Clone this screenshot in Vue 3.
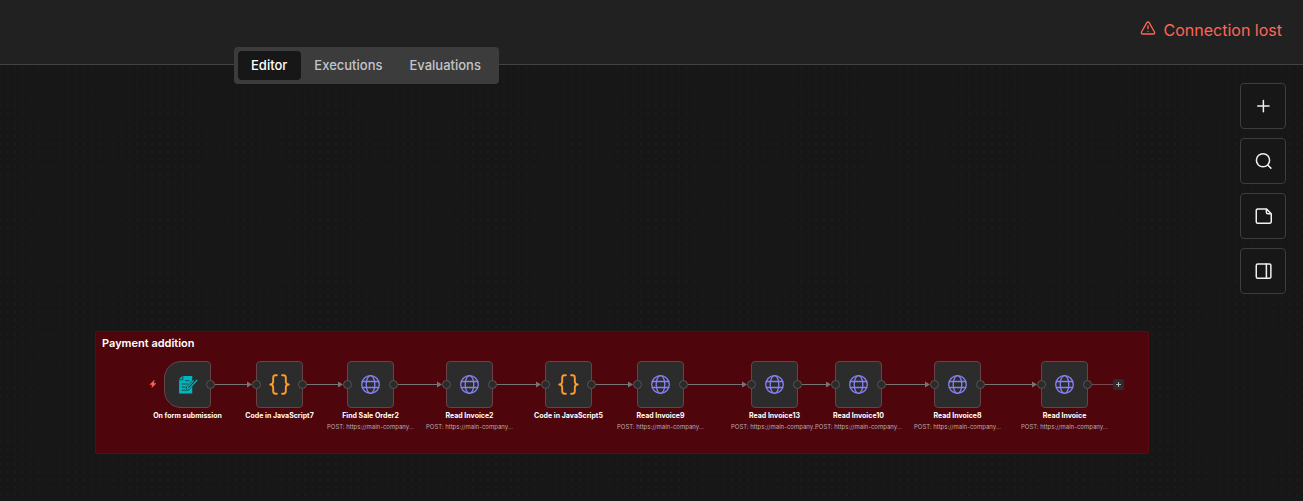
<script setup>
const tabs = ['Editor', 'Executions', 'Evaluations']
const active = 'Editor'

const post = 'POST: https://main-company...'
const nodes = [
  { x: 187, name: 'On form submission', kind: 'form' },
  { x: 279, name: 'Code in JavaScript7', kind: 'code' },
  { x: 370, name: 'Find Sale Order2', kind: 'http', sub: post },
  { x: 469, name: 'Read Invoice2', kind: 'http', sub: post },
  { x: 568, name: 'Code in JavaScript5', kind: 'code' },
  { x: 660, name: 'Read Invoice9', kind: 'http', sub: post },
  { x: 774, name: 'Read Invoice13', kind: 'http', sub: post },
  { x: 858, name: 'Read Invoice10', kind: 'http', sub: post },
  { x: 957, name: 'Read Invoice8', kind: 'http', sub: post },
  { x: 1064, name: 'Read Invoice', kind: 'http', sub: post },
]
const origin = { x: 95 }
const edges = nodes.slice(1).map((n, i) => ({
  from: nodes[i].x + 27 - origin.x,
  to: n.x - 28 - origin.x,
}))
const last = nodes[nodes.length - 1].x - origin.x
</script>

<template>
  <div class="app">
    <header class="header">
      <div class="status" role="status">
        <svg class="warn" viewBox="0 0 24 24" aria-hidden="true">
          <path d="m21.73 18-8-14a2 2 0 0 0-3.48 0l-8 14A2 2 0 0 0 4 21h16a2 2 0 0 0 1.73-3M12 9v4M12 17h.01" />
        </svg>
        <span>Connection lost</span>
      </div>
      <nav class="tabs">
        <button v-for="t in tabs" :key="t" type="button" class="tab" :class="{ active: t === active }">{{ t }}</button>
      </nav>
    </header>

    <main class="canvas">
      <svg class="dots" aria-hidden="true">
        <defs>
          <pattern id="grid" width="16" height="16" patternUnits="userSpaceOnUse" patternTransform="translate(3.6 -1.3) scale(.477)">
            <circle cx="8" cy="8" r="1" />
          </pattern>
        </defs>
        <rect width="100%" height="100%" fill="url(#grid)" />
      </svg>

      <section class="sticky">
        <h2 class="sticky-title">Payment addition</h2>

        <svg class="edges" aria-hidden="true">
          <g v-for="e in edges" :key="e.from">
            <path :d="`M${e.from} 52.5H${e.to - 3}`" />
            <path class="head" :d="`M${e.to - 5} 49.5l5 3-5 3z`" />
          </g>
          <path class="open" :d="`M${last + 27} 52.5h22`" />
        </svg>

        <svg class="bolt" viewBox="0 0 8 8" aria-hidden="true">
          <path d="M5 .5 1 4.6h2.4L2.8 7.5 7 3.4H4.6z" />
        </svg>

        <div
          v-for="n in nodes"
          :key="n.name"
          class="node"
          :class="n.kind"
          :style="{ left: n.x - origin.x + 'px' }"
        >
          <div class="box">
            <svg v-if="n.kind === 'http'" class="icon" viewBox="0 0 21 21" aria-hidden="true">
              <circle cx="10.5" cy="10.5" r="8.8" />
              <ellipse cx="10.5" cy="10.5" rx="4.3" ry="8.8" />
              <path d="M2.4 7.5h16.2M2.4 13.5h16.2" />
            </svg>
            <svg v-else-if="n.kind === 'code'" class="icon" viewBox="0 0 20 20" aria-hidden="true">
              <path d="M7.5 1.2H6.3Q4 1.2 4 3.5V7Q4 10 1.2 10 4 10 4 13v3.5q0 2.3 2.3 2.3h1.2M12.5 1.2h1.2Q16 1.2 16 3.5V7q0 3 2.8 3-2.8 0-2.8 3v3.5q0 2.3-2.3 2.3h-1.2" />
            </svg>
            <svg v-else class="icon" viewBox="0 0 20 20" aria-hidden="true">
              <path class="sheet" d="M5 2h9.500v16.500H2V5z" />
              <path class="cut" d="M2 5.500h3.500V2M7.500 6.500h4.500M4.500 9.500h6M4.500 12.500h3.500M4.500 15.500h6" />
              <path class="pen-gap" d="m10.500 13.500 7-7.500" />
              <path class="pen" d="m9.500 14.500 1-2.500 5-5.500M9.500 14.500l2.500-1 7-7.500" />
            </svg>
            <i v-if="n.kind !== 'form'" class="port in"></i>
            <i class="port out"></i>
          </div>
          <div class="name">{{ n.name }}</div>
          <div v-if="n.sub" class="sub">{{ n.sub }}</div>
        </div>

        <button type="button" class="append" aria-label="Add next node">
          <svg viewBox="0 0 11 11" aria-hidden="true"><path d="M5.500 3.500v4M3.500 5.500h4" /></svg>
        </button>
      </section>

      <aside class="tools">
        <button type="button" class="tool" aria-label="Add node">
          <svg viewBox="0 0 24 24" aria-hidden="true"><path d="M5 12h15M12.500 4.500v15" /></svg>
        </button>
        <button type="button" class="tool" aria-label="Search">
          <svg viewBox="0 0 24 24" aria-hidden="true"><circle cx="12" cy="11" r="8.800" /><path d="m22.500 21.500-4.200-4.200" /></svg>
        </button>
        <button type="button" class="tool" aria-label="Add sticky note">
          <svg viewBox="0 0 24 24" aria-hidden="true"><path d="M16.500 2.500H5a2 2 0 0 0-2 2v15a2 2 0 0 0 2 2h16a2 2 0 0 0 2-2V9zM16.500 2.500V7a2 2 0 0 0 2 2H23" /></svg>
        </button>
        <button type="button" class="tool" aria-label="Toggle panel">
          <svg viewBox="0 0 24 24" aria-hidden="true"><rect x="3" y="2.500" width="19.500" height="19" rx="2" /><path d="M16.500 2.500v19" /></svg>
        </button>
      </aside>
    </main>
  </div>
</template>

<style>
body {
  background: #171717;
}
</style>

<style scoped>
.app {
  display: flex;
  flex-direction: column;
  min-height: 100vh;
  overflow: hidden;
  font-family: Inter, "Liberation Sans", sans-serif;
  color: #fff;
}
button {
  font-family: inherit;
  padding: 0;
  cursor: pointer;
}
svg {
  fill: none;
  stroke-linecap: round;
  stroke-linejoin: round;
}
.header {
  position: relative;
  z-index: 1;
  display: flex;
  justify-content: flex-end;
  height: 64px;
  padding: 0 21px;
  background: #212121;
  border-bottom: 1px solid #434343;
}
.status {
  display: flex;
  align-items: center;
  gap: 8px;
  height: 60px;
  font-size: 16px;
  color: #ff6655;
}
.warn {
  width: 16px;
  height: 16px;
  margin-bottom: 4px;
  stroke: currentColor;
  stroke-width: 2;
}
.tabs {
  position: absolute;
  top: 47px;
  left: 234px;
  display: flex;
  padding: 4px;
  background: #3c3c3c;
  border-radius: 4px;
}
.tab {
  height: 29px;
  padding: 0 14px 1px 13px;
  border: 0;
  border-radius: 4px;
  background: none;
  color: #c3c6c9;
  font-size: 13px;
  font-weight: 500;
}
.tab.active {
  background: #171717;
  color: #fff;
}
.canvas {
  position: relative;
  display: flex;
  flex: 1;
  justify-content: flex-end;
  background: #171717;
}
.dots {
  position: absolute;
  width: 100%;
  height: 100%;
}
.dots circle {
  fill: #303030;
}
.tools {
  display: flex;
  flex-direction: column;
  gap: 9px;
  padding: 18px 17px;
  z-index: 1;
}
.tool {
  display: grid;
  place-items: center;
  width: 46px;
  height: 46px;
  border: 1px solid #3d3d3d;
  border-radius: 4px;
  background: #171717;
}
.tool svg {
  width: 18px;
  height: 18px;
  stroke: #f0f0f0;
  stroke-width: 2;
}
.sticky {
  position: absolute;
  left: 95px;
  top: 266px;
  width: 1052px;
  height: 121px;
  background: #4e060c;
  border: 1px solid #5c0b12;
  border-radius: 2px;
}
.sticky-title {
  margin: 4px 6px;
  font-size: 11px;
  line-height: 15px;
  font-weight: 600;
}
.edges {
  position: absolute;
  left: 0;
  top: 0;
  width: 100%;
  height: 100%;
  stroke: #777474;
}
.edges .head {
  fill: #777474;
  stroke: none;
}
.edges .open {
  stroke: #764a4d;
}
.bolt {
  position: absolute;
  left: 53px;
  top: 48px;
  width: 8px;
  height: 8px;
  fill: #ff6b57;
  stroke: #ff6b57;
  stroke-width: .5;
}
.node {
  position: absolute;
  top: 29px;
  display: flex;
  flex-direction: column;
  align-items: center;
  width: 111px;
  margin-left: -56px;
  text-align: center;
  white-space: nowrap;
}
.box {
  position: relative;
  display: grid;
  place-items: center;
  box-sizing: border-box;
  width: 47px;
  height: 47px;
  background: #2c2c2c;
  border: 1px solid #6a4144;
  border-radius: 4px;
}
.form .box {
  border-radius: 17px 4px 4px 17px;
}
.icon {
  width: 21px;
  height: 21px;
}
.http .icon {
  stroke: #8682f3;
  stroke-width: 1.3;
}
.code .icon {
  stroke: #ff9b26;
  stroke-width: 1.8;
}
.sheet {
  fill: #00b5bd;
}
.cut {
  stroke: #23484b;
  stroke-linecap: butt;
}
.pen-gap {
  stroke: #2c2c2c;
  stroke-width: 4;
}
.pen {
  stroke: #00b5bd;
  stroke-width: 1.2;
}
.port {
  position: absolute;
  top: 18px;
  box-sizing: border-box;
  width: 9px;
  height: 9px;
  background: #2b2b2b;
  border: 1px solid #555;
  border-radius: 50%;
}
.in {
  left: -5px;
}
.out {
  right: -5px;
}
.name {
  margin-top: 3px;
  font-size: 7px;
  line-height: 10px;
  font-weight: 700;
}
.sub {
  font-size: 6px;
  line-height: 11px;
  color: #bda9aa;
}
.append {
  position: absolute;
  left: 1017px;
  top: 47px;
  width: 11px;
  height: 11px;
  border: 0;
  border-radius: 2px;
  background: #2c2c2c;
}
.append svg {
  display: block;
  stroke: #b5b5b5;
}
</style>
